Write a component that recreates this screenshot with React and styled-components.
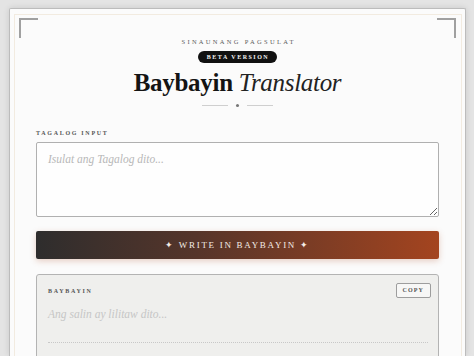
import styled, { createGlobalStyle } from "styled-components";

const GlobalStyle = createGlobalStyle`
  html, body {
    margin: 0;
    padding: 0;
    background: #e4e4e4;
    font-family: "Liberation Serif", serif;
    overflow: hidden;
  }
`;

export default function App() {
  return (
    <>
      <GlobalStyle />
      <Page>
        <Card>
          <Corner $side="left" />
          <Corner $side="right" />
          <Header>
            <Kicker>Sinaunang Pagsulat</Kicker>
            <Badge>Beta Version</Badge>
            <Title>
              Baybayin <em>Translator</em>
            </Title>
            <Divider>
              <Line />
              <Dot />
              <Line />
            </Divider>
          </Header>

          <Label>Tagalog Input</Label>
          <Input placeholder="Isulat ang Tagalog dito..." />

          <WriteButton>✦ Write in Baybayin ✦</WriteButton>

          <Output>
            <OutputHead>
              <Label $inBox>Baybayin</Label>
              <CopyButton>Copy</CopyButton>
            </OutputHead>
            <Placeholder>Ang salin ay lilitaw dito...</Placeholder>
            <Dotted />
          </Output>
        </Card>
      </Page>
    </>
  );
}

const Page = styled.div`
  padding: 8px 8px 0 9px;
  height: 356px;
  box-sizing: border-box;
`;

const Card = styled.div`
  position: relative;
  background: #fbfbfb;
  border: 1px solid #bcbcbc;
  border-bottom: none;
  border-radius: 2px 2px 0 0;
  box-shadow: 0 0 6px rgba(0, 0, 0, 0.12);
  padding: 28px 26px 0 26px;
  height: 100%;
  box-sizing: border-box;
  overflow: hidden;

  &::before {
    content: "";
    position: absolute;
    inset: 5px 3px 0 4px;
    border: 1px solid #f2ebe0;
    border-bottom: none;
    pointer-events: none;
  }
`;

const Corner = styled.span`
  position: absolute;
  top: 9px;
  ${(p) => (p.$side === "left" ? "left: 9px;" : "right: 9px;")}
  width: 17px;
  height: 18px;
  border-top: 2px solid #a0a0a0;
  ${(p) =>
    p.$side === "left"
      ? "border-left: 2px solid #a0a0a0;"
      : "border-right: 2px solid #a0a0a0;"}
`;

const Header = styled.div`
  display: flex;
  flex-direction: column;
  align-items: center;
`;

const Kicker = styled.div`
  font-size: 6.5px;
  line-height: 10px;
  letter-spacing: 2.3px;
  text-transform: uppercase;
  color: #5c5c5c;
  margin-right: -2.3px;
`;

const Badge = styled.div`
  margin-top: 4px;
  height: 12px;
  line-height: 12px;
  padding: 0 8px 0 9px;
  border-radius: 6px;
  background: #111;
  color: #f4f4f4;
  font-size: 6px;
  font-weight: bold;
  letter-spacing: 1.5px;
  text-transform: uppercase;
`;

const Title = styled.h1`
  margin: 4px 0 0;
  font-size: 25px;
  line-height: 32px;
  font-weight: bold;
  color: #141414;
  letter-spacing: -0.3px;

  em {
    font-weight: normal;
    font-style: italic;
    color: #222;
  }
`;

const Divider = styled.div`
  margin-top: 5px;
  display: flex;
  align-items: center;
  gap: 8px;
`;

const Line = styled.span`
  width: 26px;
  height: 1px;
  background: #cfcfcf;
`;

const Dot = styled.span`
  width: 3px;
  height: 3px;
  border-radius: 50%;
  background: #777;
`;

const Label = styled.div`
  margin-top: ${(p) => (p.$inBox ? "0" : "21px")};
  font-size: 6px;
  line-height: 10px;
  font-weight: bold;
  letter-spacing: 1.7px;
  text-transform: uppercase;
  color: #555;
`;

const Input = styled.textarea`
  display: block;
  margin-top: 4px;
  width: 100%;
  height: 75px;
  box-sizing: border-box;
  padding: 10px 11px;
  border: 1px solid #b0b0b0;
  border-radius: 2px;
  background: #fefefe;
  font-family: "Liberation Serif", serif;
  font-size: 11.5px;
  font-style: italic;
  color: #333;
  resize: vertical;
  outline: none;

  &::placeholder {
    color: #b8b8b8;
  }
`;

const WriteButton = styled.button`
  display: block;
  margin-top: 14px;
  width: 100%;
  height: 28px;
  border: none;
  border-radius: 2px;
  background: linear-gradient(90deg, #2e2d2d 0%, #56352a 40%, #a4441f 100%);
  box-shadow: 0 2px 6px rgba(170, 70, 30, 0.25);
  color: #f4ece5;
  font-family: "Liberation Serif", serif;
  font-size: 9px;
  letter-spacing: 1.7px;
  text-transform: uppercase;
`;

const Output = styled.div`
  margin-top: 15px;
  height: 120px;
  border: 1px solid #b3b3b3;
  border-radius: 3px;
  background: #efefed;
  padding: 8px 7px 0 11px;
`;

const OutputHead = styled.div`
  display: flex;
  justify-content: space-between;
  align-items: center;
`;

const CopyButton = styled.button`
  height: 15px;
  padding: 0 6px;
  border: 1px solid #9d9d9d;
  border-radius: 2px;
  background: #f7f7f6;
  color: #555;
  font-family: "Liberation Serif", serif;
  font-size: 6px;
  font-weight: bold;
  letter-spacing: 1.1px;
  text-transform: uppercase;
  line-height: 13px;
`;

const Placeholder = styled.div`
  margin-top: 10px;
  font-size: 11.5px;
  font-style: italic;
  color: #c6c6c6;
`;

const Dotted = styled.div`
  margin-top: 22px;
  margin-right: 3px;
  border-bottom: 1px dotted #c8c8c8;
`;
